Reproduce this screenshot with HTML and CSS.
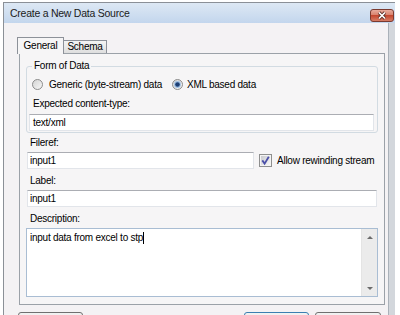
FILE: index.html
```html
<!DOCTYPE html>
<html lang="en">
<head>
  <meta charset="UTF-8" />
  <title>Create a New Data Source</title>
  <link rel="stylesheet" href="styles.css">
</head>
<body>
<div class="window">
  <div class="titlebar">
    <span class="title">Create a New Data Source</span>
    <span class="close">
      <svg width="24" height="13" viewBox="0 0 24 13">
        <defs>
          <linearGradient id="closeGrad" x1="0" y1="0" x2="0" y2="1">
            <stop offset="0" stop-color="#eab0a2"/>
            <stop offset="0.45" stop-color="#d9826d"/>
            <stop offset="0.5" stop-color="#c4472f"/>
            <stop offset="1" stop-color="#d9826a"/>
          </linearGradient>
        </defs>
        <rect x="0.5" y="0.5" width="23" height="12" rx="2.5" fill="url(#closeGrad)" stroke="#7a3b30"/>
        <path d="M9 3.5 L15 9.5 M15 3.5 L9 9.5" stroke="#5a2c24" stroke-width="3.2"/>
        <path d="M9 3.5 L15 9.5 M15 3.5 L9 9.5" stroke="#fff" stroke-width="1.7"/>
      </svg>
    </span>
  </div>
  <div class="client">
    <div class="tabs">
      <div class="tab active">General</div>
      <div class="tab">Schema</div>
    </div>
    <div class="panel">
      <fieldset class="group">
        <legend>Form of Data</legend>
        <div class="radio-row">
          <label class="radio first">
            <svg width="11" height="11" viewBox="0 0 11 11">
              <defs>
                <linearGradient id="radioGrad" x1="0" y1="0" x2="1" y2="1">
                  <stop offset="0" stop-color="#d2d2d2"/>
                  <stop offset="1" stop-color="#f8f8f8"/>
                </linearGradient>
              </defs>
              <circle cx="5.5" cy="5.5" r="5" fill="url(#radioGrad)" stroke="#8c8c8c"/>
            </svg>
            Generic (byte-stream) data
          </label>
          <label class="radio">
            <svg width="11" height="11" viewBox="0 0 11 11">
              <circle cx="5.5" cy="5.5" r="5" fill="url(#radioGrad)" stroke="#8c8c8c"/>
              <circle cx="5.5" cy="5.5" r="3.4" fill="#9fc0e4"/>
              <circle cx="5.5" cy="5.5" r="2.3" fill="#1d3e74"/>
            </svg>
            XML based data
          </label>
        </div>
        <div class="field-label inset">Expected content-type:</div>
        <div class="textbox">text/xml</div>
      </fieldset>

      <div class="form">
        <div class="field-label">Fileref:</div>
        <div class="fileref-row">
          <div class="textbox fileref">input1</div>
          <label class="check">
            <svg width="13" height="13" viewBox="0 0 13 13">
              <defs>
                <linearGradient id="checkGrad" x1="0" y1="0" x2="1" y2="1">
                  <stop offset="0" stop-color="#c9cacf"/>
                  <stop offset="1" stop-color="#f7f7f7"/>
                </linearGradient>
              </defs>
              <rect x="0.5" y="0.5" width="12" height="12" fill="#f4f4f4" stroke="#8e8f8f"/>
              <rect x="2" y="2" width="9" height="9" fill="url(#checkGrad)"/>
              <path d="M3.3 6.4 L5.6 9.6 L9.8 2.8" fill="none" stroke="#4b4fa8" stroke-width="1.8"/>
            </svg>
            Allow rewinding stream
          </label>
        </div>

        <div class="field-label spaced">Label:</div>
        <div class="textbox">input1</div>

        <div class="field-label spaced">Description:</div>
        <div class="memo">
          <div class="memo-text">input data from excel to stp<span class="caret"></span></div>
          <div class="scrollbar">
            <span class="arrow up"></span>
            <span class="arrow down"></span>
          </div>
        </div>
      </div>
    </div>
    <div class="buttons">
      <div class="button help"></div>
      <div class="button ok"></div>
      <div class="button cancel"></div>
    </div>
  </div>
</div>
</body>
</html>
```

FILE: styles.css
```css
body {
  margin: 0;
  background: #fff;
  font-family: "Liberation Sans", Arial, sans-serif;
  font-size: 10px;
  letter-spacing: -0.25px;
  color: #000;
  overflow: hidden;
}
.window {
  margin: 2px 0 0 3px;
  width: 392px;
  height: 313px;
  box-sizing: border-box;
  border-left: 1px solid #8b9097;
  border-top: 1px solid #8b9097;
  background: #d3d7dc;
  display: flex;
  flex-direction: column;
}
.titlebar {
  height: 20px;
  flex: none;
  display: flex;
  align-items: center;
  padding-left: 6px;
  background: linear-gradient(#dde8f4, #c3d6ed);
}
.title {
  font-size: 10.5px;
  color: #1b1b1b;
}
.close {
  margin-left: auto;
  margin-right: 1px;
  align-self: flex-end;
  margin-bottom: 1px;
  height: 13px;
}
.close svg {
  display: block;
}
.client {
  flex: 1;
  background: #f4f2f4;
  margin-right: 6px;
  border-right: 1px solid #aab1b9;
  padding-top: 14px;
  overflow: hidden;
}
.tabs {
  display: flex;
  align-items: flex-end;
  height: 16px;
  margin-left: 13px;
}
.tab {
  box-sizing: border-box;
  height: 13px;
  width: 43px;
  line-height: 12px;
  text-align: center;
  border: 1px solid #8d9199;
  border-left: none;
  border-bottom: none;
  background: linear-gradient(#f4f4f4, #dedede);
}
.tab.active {
  position: relative;
  z-index: 1;
  width: 47px;
  height: 17px;
  margin-bottom: -1px;
  line-height: 15px;
  border-left: 1px solid #8d9199;
  background: #f6f5f6;
}
.panel {
  box-sizing: border-box;
  margin-left: 15px;
  width: 366px;
  height: 252px;
  border: 1px solid #9ba1a8;
  background: #f6f5f6;
}
.group {
  margin: 6px 6px 0 6px;
  padding: 0 3px 1px 2px;
  border: 1px solid #d2dbe2;
  border-radius: 3px;
}
.group legend {
  margin-left: 3px;
  padding: 0 2px;
  line-height: 12px;
}
.radio-row {
  display: flex;
  align-items: center;
  height: 12px;
  margin-top: 6px;
}
.radio {
  display: flex;
  align-items: center;
  gap: 4px;
}
.radio.first {
  width: 140px;
  margin-left: 3px;
  gap: 6px;
}
.field-label {
  line-height: 12px;
  height: 12px;
  padding-left: 3px;
  margin-top: 4px;
}
.field-label.inset {
  padding-left: 4px;
  margin-top: 8px;
}
.field-label.spaced {
  margin-top: 6px;
}
.textbox {
  box-sizing: border-box;
  height: 17px;
  line-height: 15px;
  padding: 0 3px;
  margin-top: 4px;
  background: #fff;
  border: 1px solid #e2e5ea;
  border-top-color: #abadb3;
}
.form {
  margin: 0 7px;
}
.form .textbox {
  margin-top: 3px;
  padding-left: 2px;
}
.fileref-row {
  display: flex;
  align-items: center;
}
.textbox.fileref {
  width: 227px;
}
.check {
  display: flex;
  align-items: center;
  gap: 5px;
  margin-left: 5px;
  margin-top: 2px;
}
.memo {
  box-sizing: border-box;
  display: flex;
  height: 69px;
  margin: 3px -1px 0 -1px;
  background: #fff;
  border: 1px solid #a9bdd3;
}
.memo-text {
  flex: 1;
  padding: 2px 0 0 3px;
  line-height: 13px;
}
.caret {
  display: inline-block;
  width: 1px;
  height: 12px;
  background: #000;
  vertical-align: -3px;
}
.scrollbar {
  width: 15px;
  background: #ebebeb;
  border-left: 1px solid #e4e4e4;
  display: flex;
  flex-direction: column;
  justify-content: space-between;
  align-items: center;
  padding: 7px 0 6px;
}
.arrow {
  width: 0;
  height: 0;
  border-left: 3px solid transparent;
  border-right: 3px solid transparent;
}
.arrow.up {
  border-bottom: 3px solid #6b6b6b;
}
.arrow.down {
  border-top: 3px solid #6b6b6b;
}
.buttons {
  display: flex;
  margin-top: 7px;
}
.button {
  box-sizing: border-box;
  height: 23px;
  border: 1px solid #707070;
  border-radius: 3px;
  background: linear-gradient(#f2f2f2, #dcdcdc);
}
.button.help {
  width: 65px;
  margin-left: 14px;
}
.button.ok {
  width: 65px;
  margin-left: 161px;
  border-color: #3c7fb1;
}
.button.cancel {
  width: 66px;
  margin-left: 6px;
}
```
